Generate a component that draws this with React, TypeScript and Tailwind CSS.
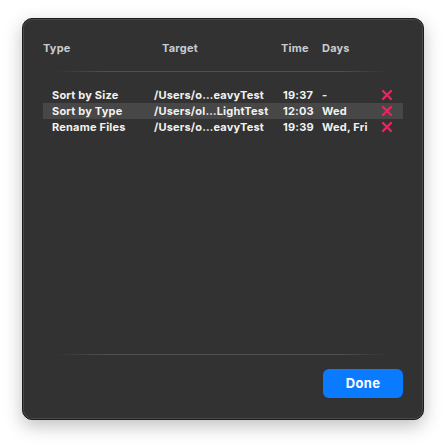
import React from "react";

const rows = [
  { type: "Sort by Size", target: "/Users/o…eavyTest", time: "19:37", days: "-", hl: false },
  { type: "Sort by Type", target: "/Users/ol…LightTest", time: "12:03", days: "Wed", hl: true },
  { type: "Rename Files", target: "/Users/o…eavyTest", time: "19:39", days: "Wed, Fri", hl: false },
];

function XIcon() {
  return (
    <svg width="12" height="12" viewBox="0 0 12 12">
      <path d="M2 2 L10 10 M10 2 L2 10" stroke="#e8265e" strokeWidth="2.4" strokeLinecap="round" />
    </svg>
  );
}

function Sep() {
  return (
    <div className="mx-[33px] h-px bg-[linear-gradient(to_right,rgba(90,90,90,0),#4f4f4f_15%,#4f4f4f_85%,rgba(90,90,90,0))]" />
  );
}

export default function App() {
  return (
    <div className="w-[446px] h-[446px] bg-white pt-[18px] pl-[22px]" style={{ fontFamily: "Inter, 'Liberation Sans', sans-serif" }}>
      <div className="w-[402px] h-[402px] rounded-[10px] bg-[#323232] border border-[#1c1c1c] shadow-[0_6px_18px_rgba(0,0,0,0.25),inset_0_0_0_1px_#4a4a4a] flex flex-col">
        <div className="h-[21px]" />
        <div className="flex items-center h-[16px] pl-[20px] text-[11px] font-bold text-[#c8cbcf] tracking-[0.2px]">
          <div className="w-[119px]">Type</div>
          <div className="w-[119px]">Target</div>
          <div className="w-[41px]">Time</div>
          <div>Days</div>
        </div>
        <div className="h-[15px]" />
        <Sep />
        <div className="h-[15px]" />
        <div className="flex flex-col mx-[20px]">
          {rows.map((r) => (
            <div
              key={r.type}
              className={`flex items-center h-[16px] pl-[9px] text-[11px] font-bold text-[#f2f2f2] tracking-[0.2px] ${r.hl ? "bg-[#474747]" : ""}`}
            >
              <div className="w-[102px] whitespace-nowrap">{r.type}</div>
              <div className="w-[129px] whitespace-nowrap">{r.target}</div>
              <div className="w-[39px]">{r.time}</div>
              <div className="w-[59px] whitespace-nowrap">{r.days}</div>
              <XIcon />
            </div>
          ))}
        </div>
        <div className="flex-1" />
        <Sep />
        <div className="flex justify-end pr-[20px] pt-[14px] pb-[21px]">
          <button className="w-[80px] h-[29px] rounded-[6px] bg-[#0a7aff] text-white text-[13px] font-bold tracking-[0.3px]">
            Done
          </button>
        </div>
      </div>
    </div>
  );
}
